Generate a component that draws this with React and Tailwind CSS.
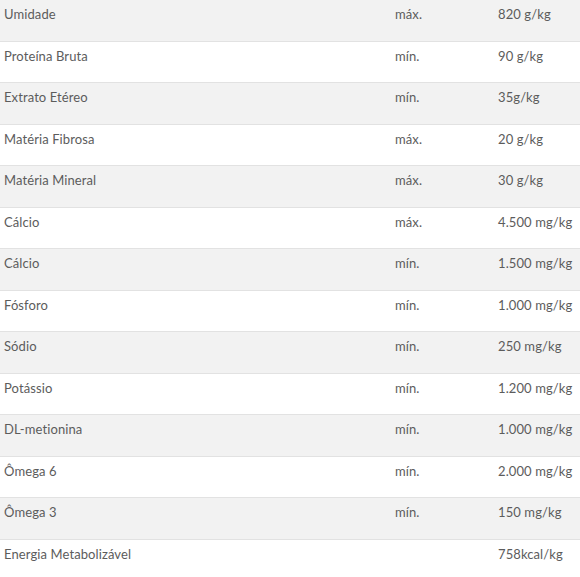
const rows = [
  ["Umidade", "máx.", "820 g/kg"],
  ["Proteína Bruta", "mín.", "90 g/kg"],
  ["Extrato Etéreo", "mín.", "35g/kg"],
  ["Matéria Fibrosa", "máx.", "20 g/kg"],
  ["Matéria Mineral", "máx.", "30 g/kg"],
  ["Cálcio", "máx.", "4.500 mg/kg"],
  ["Cálcio", "mín.", "1.500 mg/kg"],
  ["Fósforo", "mín.", "1.000 mg/kg"],
  ["Sódio", "mín.", "250 mg/kg"],
  ["Potássio", "mín.", "1.200 mg/kg"],
  ["DL-metionina", "mín.", "1.000 mg/kg"],
  ["Ômega 6", "mín.", "2.000 mg/kg"],
  ["Ômega 3", "mín.", "150 mg/kg"],
  ["Energia Metabolizável", "", "758kcal/kg"],
];

export default function App() {
  return (
    <div className="w-[580px] bg-white font-['Lato',sans-serif] text-[13px] tracking-[0.1px] text-[#5c5c5c]">
      {rows.map((r, i) => (
        <div
          key={i}
          className={`grid h-[41.5px] grid-cols-[391px_103px_1fr] border-b border-[#e2e2e2] ${
            i % 2 === 0 ? "bg-[#f2f2f2]" : "bg-white"
          }`}
        >
          <div className="pl-1 pt-1 leading-5">{r[0]}</div>
          <div className="pl-1 pt-1 leading-5">{r[1]}</div>
          <div className="pl-1 pt-1 leading-5">{r[2]}</div>
        </div>
      ))}
    </div>
  );
}
